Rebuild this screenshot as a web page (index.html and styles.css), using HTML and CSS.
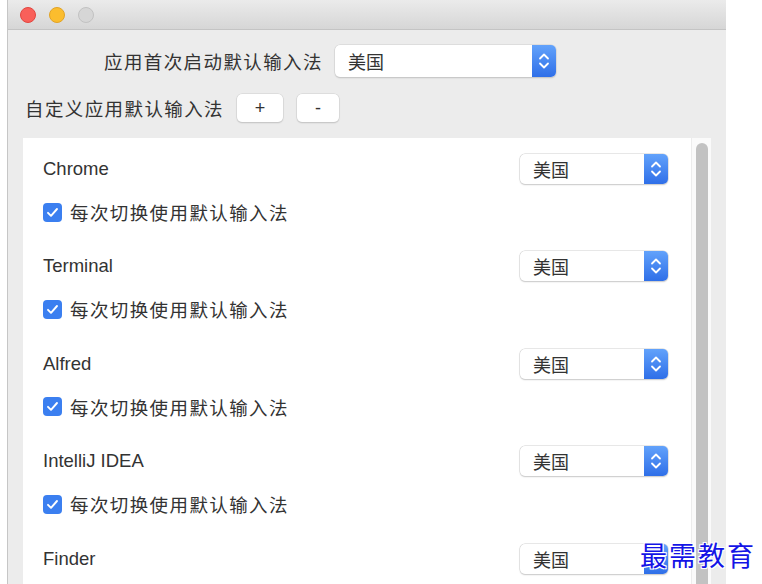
FILE: index.html
```html
<!DOCTYPE html>
<html lang="zh-CN">
<head>
<meta charset="utf-8">
<title>输入法设置</title>
<link rel="stylesheet" href="styles.css">
</head>
<body>
<div class="window">
  <div class="titlebar">
    <span class="light red"></span>
    <span class="light yellow"></span>
    <span class="light gray"></span>
  </div>
  <div class="content">
    <div class="row-first">
      <span class="label">应用首次启动默认输入法</span>
      <div class="select select-wide">
        <span class="select-text">美国</span>
        <span class="stepper"><svg width="24" height="32" viewBox="0 0 24 32"><path d="M8 13.5 L12 9.5 L16 13.5" fill="none" stroke="#fff" stroke-width="1.8" stroke-linecap="round" stroke-linejoin="round"/><path d="M8 18.5 L12 22.5 L16 18.5" fill="none" stroke="#fff" stroke-width="1.8" stroke-linecap="round" stroke-linejoin="round"/></svg></span>
      </div>
    </div>
    <div class="row-second">
      <span class="label">自定义应用默认输入法</span>
      <button class="btn btn-plus">+</button>
      <button class="btn btn-minus">-</button>
    </div>
    <div class="panel">
      <div class="list">
        <div class="item">
          <div class="item-head"><span class="app-name">Chrome</span>
            <div class="select select-small"><span class="select-text">美国</span><span class="stepper"><svg width="24" height="30" viewBox="0 0 24 30"><path d="M8 12.5 L12 8.5 L16 12.5" fill="none" stroke="#fff" stroke-width="1.8" stroke-linecap="round" stroke-linejoin="round"/><path d="M8 17.5 L12 21.5 L16 17.5" fill="none" stroke="#fff" stroke-width="1.8" stroke-linecap="round" stroke-linejoin="round"/></svg></span></div>
          </div>
          <label class="check-row"><span class="checkbox"><svg width="19" height="19" viewBox="0 0 19 19"><path d="M5 9.8 L8 12.8 L14 6" fill="none" stroke="#fff" stroke-width="1.9" stroke-linecap="round" stroke-linejoin="round"/></svg></span><span class="check-text">每次切换使用默认输入法</span></label>
        </div>
        <div class="item">
          <div class="item-head"><span class="app-name">Terminal</span>
            <div class="select select-small"><span class="select-text">美国</span><span class="stepper"><svg width="24" height="30" viewBox="0 0 24 30"><path d="M8 12.5 L12 8.5 L16 12.5" fill="none" stroke="#fff" stroke-width="1.8" stroke-linecap="round" stroke-linejoin="round"/><path d="M8 17.5 L12 21.5 L16 17.5" fill="none" stroke="#fff" stroke-width="1.8" stroke-linecap="round" stroke-linejoin="round"/></svg></span></div>
          </div>
          <label class="check-row"><span class="checkbox"><svg width="19" height="19" viewBox="0 0 19 19"><path d="M5 9.8 L8 12.8 L14 6" fill="none" stroke="#fff" stroke-width="1.9" stroke-linecap="round" stroke-linejoin="round"/></svg></span><span class="check-text">每次切换使用默认输入法</span></label>
        </div>
        <div class="item">
          <div class="item-head"><span class="app-name">Alfred</span>
            <div class="select select-small"><span class="select-text">美国</span><span class="stepper"><svg width="24" height="30" viewBox="0 0 24 30"><path d="M8 12.5 L12 8.5 L16 12.5" fill="none" stroke="#fff" stroke-width="1.8" stroke-linecap="round" stroke-linejoin="round"/><path d="M8 17.5 L12 21.5 L16 17.5" fill="none" stroke="#fff" stroke-width="1.8" stroke-linecap="round" stroke-linejoin="round"/></svg></span></div>
          </div>
          <label class="check-row"><span class="checkbox"><svg width="19" height="19" viewBox="0 0 19 19"><path d="M5 9.8 L8 12.8 L14 6" fill="none" stroke="#fff" stroke-width="1.9" stroke-linecap="round" stroke-linejoin="round"/></svg></span><span class="check-text">每次切换使用默认输入法</span></label>
        </div>
        <div class="item">
          <div class="item-head"><span class="app-name">IntelliJ IDEA</span>
            <div class="select select-small"><span class="select-text">美国</span><span class="stepper"><svg width="24" height="30" viewBox="0 0 24 30"><path d="M8 12.5 L12 8.5 L16 12.5" fill="none" stroke="#fff" stroke-width="1.8" stroke-linecap="round" stroke-linejoin="round"/><path d="M8 17.5 L12 21.5 L16 17.5" fill="none" stroke="#fff" stroke-width="1.8" stroke-linecap="round" stroke-linejoin="round"/></svg></span></div>
          </div>
          <label class="check-row"><span class="checkbox"><svg width="19" height="19" viewBox="0 0 19 19"><path d="M5 9.8 L8 12.8 L14 6" fill="none" stroke="#fff" stroke-width="1.9" stroke-linecap="round" stroke-linejoin="round"/></svg></span><span class="check-text">每次切换使用默认输入法</span></label>
        </div>
        <div class="item">
          <div class="item-head"><span class="app-name">Finder</span>
            <div class="select select-small"><span class="select-text">美国</span><span class="stepper"><svg width="24" height="30" viewBox="0 0 24 30"><path d="M8 12.5 L12 8.5 L16 12.5" fill="none" stroke="#fff" stroke-width="1.8" stroke-linecap="round" stroke-linejoin="round"/><path d="M8 17.5 L12 21.5 L16 17.5" fill="none" stroke="#fff" stroke-width="1.8" stroke-linecap="round" stroke-linejoin="round"/></svg></span></div>
          </div>
        </div>
      </div>
      <div class="scroll-track"><div class="scroll-thumb"></div></div>
    </div>
  </div>
</div>
<div class="watermark">最需教育</div>
</body>
</html>
```
FILE: styles.css
```css
html, body {
  margin: 0;
  padding: 0;
  height: 100%;
  overflow: hidden;
  background: #ffffff;
}
body {
  font-family: "Liberation Sans", "Noto Sans CJK SC", sans-serif;
  color: #333333;
  position: relative;
}
.window {
  margin-left: 7px;
  width: 718px;
  height: 584px;
  overflow: hidden;
  border-left: 1px solid #c6c6c6;
  background: #ececec;
  display: flex;
  flex-direction: column;
}
.titlebar {
  height: 30px;
  flex: none;
  background: linear-gradient(#ebebeb, #d6d6d6);
  border-bottom: 1px solid #c4c4c4;
  display: flex;
  align-items: center;
  gap: 13px;
  padding-left: 12px;
  box-sizing: border-box;
}
.light {
  width: 16px;
  height: 16px;
  border-radius: 50%;
  box-sizing: border-box;
}
.red { background: #f9605a; border: 1px solid #e2463f; }
.yellow { background: #fbbd2e; border: 1px solid #e1a326; }
.gray { background: #d6d6d6; border: 1px solid #c2c2c2; }
.content {
  flex: 1;
  display: flex;
  flex-direction: column;
  min-height: 0;
}
.label {
  font-family: "Noto Sans CJK SC", sans-serif;
  font-size: 18.5px;
  letter-spacing: 1.4px;
  color: #333;
}
.row-first {
  display: flex;
  align-items: center;
  margin-top: 15px;
  padding-left: 96px;
  height: 32px;
}
.row-first .label { margin-right: 12px; }
.select {
  display: flex;
  align-items: stretch;
  background: #ffffff;
  border-radius: 5px;
  box-shadow: 0 0 0 0.5px #cfcfcf, 0 1px 1.5px rgba(0,0,0,0.22);
  box-sizing: border-box;
}
.select-wide { width: 221px; height: 32px; }
.select-small { width: 148px; height: 30px; }
.select-text {
  flex: 1;
  font-family: "Noto Sans CJK SC", sans-serif;
  font-size: 18px;
  color: #333;
  display: flex;
  align-items: center;
  padding-left: 13px;
}
.stepper {
  width: 24px;
  flex: none;
  border-radius: 0 5px 5px 0;
  background: linear-gradient(#62a2fb, #2f6fe8);
  display: flex;
}
.row-second {
  display: flex;
  align-items: center;
  margin-top: 17px;
  padding-left: 17px;
  height: 28px;
}
.row-second .label { margin-right: 13px; }
.btn {
  height: 28px;
  border: none;
  background: #ffffff;
  border-radius: 5px;
  box-shadow: 0 0 0 0.5px #cfcfcf, 0 1px 1.5px rgba(0,0,0,0.22);
  font-family: "Liberation Sans", sans-serif;
  font-size: 18px;
  color: #333;
  padding: 0;
}
.btn-plus { width: 46px; margin-right: 14px; }
.btn-minus { width: 42px; }
.panel {
  margin: 16px 15px 0 15px;
  flex: 1;
  display: flex;
  background: #ffffff;
  min-height: 0;
}
.list {
  flex: 1;
  padding: 16px 23px 0 20px;
}
.item {
  padding-bottom: 29.4px;
}
.item-head {
  display: flex;
  align-items: center;
  justify-content: space-between;
  height: 30px;
}
.app-name {
  font-size: 18.5px;
  color: #333;
}
.check-row {
  display: flex;
  align-items: center;
  margin-top: 18px;
  height: 20px;
}
.checkbox {
  width: 19px;
  height: 19px;
  border-radius: 4px;
  background: #3b7ff0;
  display: flex;
  margin-right: 8px;
}
.check-text {
  font-family: "Noto Sans CJK SC", sans-serif;
  font-size: 18.5px;
  letter-spacing: 1.4px;
  color: #333;
}
.scroll-track {
  width: 20px;
  flex: none;
  background: #fafafa;
  border-left: 1px solid #ececec;
  box-sizing: border-box;
  padding: 5px 3px 0 4px;
}
.scroll-thumb {
  height: 600px;
  background: #c2c2c2;
  border-radius: 6px;
}
.watermark {
  position: absolute;
  left: 640px;
  top: 535px;
  font-family: "Noto Sans CJK SC", sans-serif;
  font-size: 27px;
  letter-spacing: 2px;
  color: #1414e6;
  text-shadow: 0 0 2px #fff, 1px 1px 0 #fff, -1px -1px 0 #fff, 1px -1px 0 #fff, -1px 1px 0 #fff;
}
```
